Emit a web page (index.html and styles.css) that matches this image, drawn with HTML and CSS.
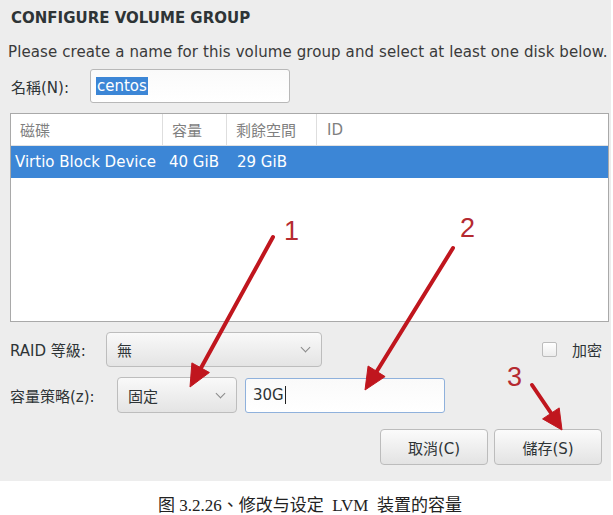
FILE: index.html
```html
<!DOCTYPE html>
<html lang="zh-TW">

<head>
    <meta charset="UTF-8">
    <title>Configure Volume Group</title>
    <link rel="stylesheet" href="styles.css">
</head>

<body>
    <div class="panel">
        <h2 class="title">CONFIGURE VOLUME GROUP</h2>
        <p class="desc">Please create a name for this volume group and select at least one disk below.</p>

        <div class="name-row">
            <label class="lbl">名稱(N):</label>
            <div class="input name-input"><span class="sel">centos</span></div>
        </div>

        <div class="disk-table">
            <div class="trow thead">
                <div class="c1">磁碟</div>
                <div class="c2">容量</div>
                <div class="c3">剩餘空間</div>
                <div class="c4">ID</div>
            </div>
            <div class="trow selected">
                <div class="c1">Virtio Block Device</div>
                <div class="c2">40 GiB</div>
                <div class="c3">29 GiB</div>
                <div class="c4"></div>
            </div>
        </div>

        <div class="raid-row">
            <label class="lbl">RAID 等級:</label>
            <div class="combo raid-combo"><span>無</span><span class="chev"></span></div>
            <div class="encrypt">
                <span class="check"></span>
                <span>加密</span>
            </div>
        </div>

        <div class="size-row">
            <label class="lbl">容量策略(z):</label>
            <div class="combo size-combo"><span>固定</span><span class="chev"></span></div>
            <div class="input size-input">30G<span class="caret"></span></div>
        </div>

        <div class="buttons">
            <button class="btn">取消(C)</button>
            <button class="btn">儲存(S)</button>
        </div>
    </div>

    <p class="caption">图 3.2.26、修改与设定 &nbsp;LVM &nbsp;装置的容量</p>

    <!-- 标注箭头 -->
    <svg class="notes" width="613" height="515" viewBox="0 0 613 515">
        <g fill="#c0161e" stroke="#c0161e">
            <line x1="273" y1="237" x2="201" y2="368" stroke-width="4" stroke-linecap="round" />
            <polygon points="190,387 209.4,372.5 191.9,362.9" stroke-width="1" />
            <line x1="453" y1="248" x2="377" y2="371" stroke-width="4" stroke-linecap="round" />
            <polygon points="365,390 385.1,376.6 368.1,366" stroke-width="1" />
            <line x1="532" y1="385" x2="551" y2="413" stroke-width="4" stroke-linecap="round" />
            <polygon points="562,430 542.6,418.9 559.2,407.9" stroke-width="1" />
        </g>
        <g class="num">
            <text x="284" y="240">1</text>
            <text x="460" y="237">2</text>
            <text x="507" y="386">3</text>
        </g>
    </svg>
</body>

</html>
```

FILE: styles.css
```css
body {
    margin: 0;
    background-color: #fff;
    font-family: "DejaVu Sans", "Noto Sans CJK TC", sans-serif;
    color: #2e3436;
    position: relative;
    width: 613px;
    height: 515px;
}

.panel {
    width: 611px;
    height: 481px;
    background-color: #ededed;
    box-sizing: border-box;
    padding: 9px 0 0 10px;
}

.title {
    margin: 0 0 0 1px;
    font-size: 15px;
    font-weight: bold;
    line-height: 19px;
    color: #2e3436;
}

.desc {
    margin: 14px 0 0 -2px;
    font-size: 15px;
    letter-spacing: 0.1px;
    line-height: 20px;
    color: #3a3a3a;
    white-space: nowrap;
}

.lbl {
    font-size: 15px;
    color: #2e3436;
}

.name-row {
    display: flex;
    align-items: center;
    margin-top: 7px;
}

.name-row .lbl {
    width: 79px;
    padding-left: 1px;
}

.input {
    box-sizing: border-box;
    background: linear-gradient(#fafafa, #ffffff);
    border: 1px solid #b8b8b8;
    border-radius: 3px;
    font-size: 15px;
    display: flex;
    align-items: center;
}

.name-input {
    width: 200px;
    height: 34px;
    padding-left: 5px;
}

.sel {
    background-color: #3c86d6;
    color: #fff;
    line-height: 18px;
    padding: 0 1px;
}

.disk-table {
    width: 599px;
    height: 209px;
    margin-top: 10px;
    box-sizing: border-box;
    background-color: #fff;
    border: 1px solid #a9a9a9;
    font-size: 15px;
}

.trow {
    display: flex;
    height: 32px;
    align-items: stretch;
}

.trow > div {
    display: flex;
    align-items: center;
    box-sizing: border-box;
}

.c1 { width: 152px; padding-left: 9px; }
.c2 { width: 64px; padding-left: 9px; }
.c3 { width: 90px; padding-left: 9px; }
.c4 { flex: 1; padding-left: 10px; }

.thead {
    color: #7f7f7f;
    border-bottom: 1px solid #e2e2e2;
    height: 31px;
}

.thead > div:not(.c4) {
    border-right: 1px solid #dedede;
}

.selected {
    background-color: #3c86d6;
    color: #fff;
}

.selected .c1 { padding-left: 4px; }
.selected .c2 { padding-left: 6px; }
.selected .c3 { padding-left: 10px; }

.combo {
    box-sizing: border-box;
    background: linear-gradient(#f9f9f9, #e4e4e4);
    border: 1px solid #bdbdbd;
    border-radius: 4px;
    font-size: 15px;
    display: flex;
    align-items: center;
    justify-content: space-between;
    padding: 0 12px 0 10px;
}

.chev {
    width: 6px;
    height: 6px;
    border-right: 1.5px solid #8a8a8a;
    border-bottom: 1.5px solid #8a8a8a;
    transform: rotate(45deg);
    margin-top: -4px;
}

.raid-row {
    display: flex;
    align-items: center;
    margin-top: 10px;
    height: 35px;
}

.raid-row .lbl {
    width: 96px;
}

.raid-combo {
    width: 216px;
    height: 35px;
}

.encrypt {
    display: flex;
    align-items: center;
    margin-left: 220px;
    font-size: 15px;
}

.check {
    width: 13px;
    height: 13px;
    border: 1px solid #bcbcbc;
    border-radius: 2px;
    background: linear-gradient(#ffffff, #ececec);
    margin-right: 15px;
}

.size-row {
    display: flex;
    align-items: center;
    margin-top: 10px;
    height: 36px;
}

.size-row .lbl {
    width: 107px;
}

.size-combo {
    width: 120px;
    height: 36px;
}

.size-input {
    width: 200px;
    height: 35px;
    margin-left: 8px;
    padding-left: 7px;
    border-color: #8fb1dc;
}

.caret {
    width: 1px;
    height: 18px;
    background-color: #222;
    margin-left: 1px;
}

.buttons {
    display: flex;
    gap: 6px;
    margin: 16px 0 0 370px;
}

.btn {
    width: 108px;
    height: 36px;
    background: linear-gradient(#fbfbfb, #e3e3e3);
    border: 1px solid #bcbcbc;
    border-radius: 4px;
    font-family: "DejaVu Sans", "Noto Sans CJK TC", sans-serif;
    font-size: 15px;
    color: #2e3436;
    padding: 0;
}

.caption {
    margin: 10px 0 0 0;
    text-align: center;
    font-family: "Liberation Serif", "Noto Sans CJK SC", serif;
    font-size: 17px;
    color: #222;
    width: 620px;
}

.notes {
    position: absolute;
    left: 0;
    top: 0;
    pointer-events: none;
}

.num text {
    font-family: "Liberation Sans", sans-serif;
    font-size: 27px;
    fill: #b52a30;
}
```
